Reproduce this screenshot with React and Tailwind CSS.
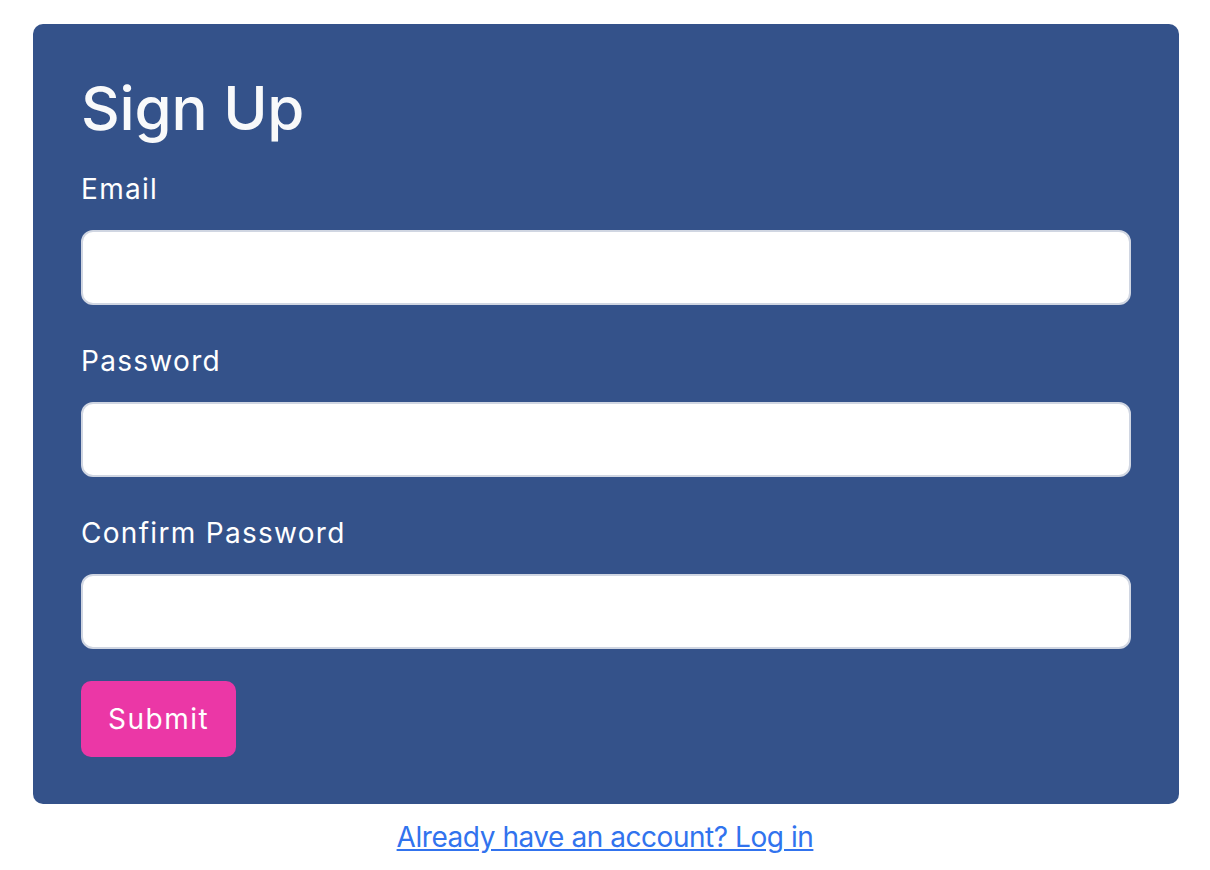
import { useState } from "react";

const Field = ({ label, type, value, onChange, last }) => (
  <div className={last ? "mb-[32px]" : "mb-[35px]"}>
    <label className="block text-[28px] leading-[42px] tracking-[1.3px] text-white mb-[20px]">{label}</label>
    <input
      type={type}
      value={value}
      onChange={(e) => onChange(e.target.value)}
      className="block w-full h-[75px] rounded-[12px] border-2 border-[#d0d6e2] bg-white px-6 text-[28px] text-[#212529] outline-none"
    />
  </div>
);

export default function App() {
  const [email, setEmail] = useState("");
  const [password, setPassword] = useState("");
  const [confirm, setConfirm] = useState("");

  return (
    <div className="min-h-screen bg-white pt-6 font-['Inter','Liberation_Sans',sans-serif]">
      <div className="ml-[33px] mr-[31px] rounded-[10px] bg-[#34528a] p-[48px] pb-[47px]">
        <h1 className="text-[60px] font-medium leading-[72px] tracking-[-0.2px] text-[#f8f9fa] mb-[24px]">Sign Up</h1>
        <form onSubmit={(e) => e.preventDefault()}>
          <Field label="Email" type="email" value={email} onChange={setEmail} />
          <Field label="Password" type="password" value={password} onChange={setPassword} />
          <Field label="Confirm Password" type="password" value={confirm} onChange={setConfirm} last />
          <button
            type="submit"
            className="h-[76px] rounded-[10px] bg-[#eb37a6] px-[27px] text-[28px] leading-[42px] tracking-[1.5px] text-white"
          >
            Submit
          </button>
        </form>
      </div>
      <div className="mt-[12px] text-center text-[28px] leading-[42px] tracking-[-0.45px]">
        <a href="#" className="text-[#3173ee] underline">
          Already have an account? Log in
        </a>
      </div>
    </div>
  );
}
